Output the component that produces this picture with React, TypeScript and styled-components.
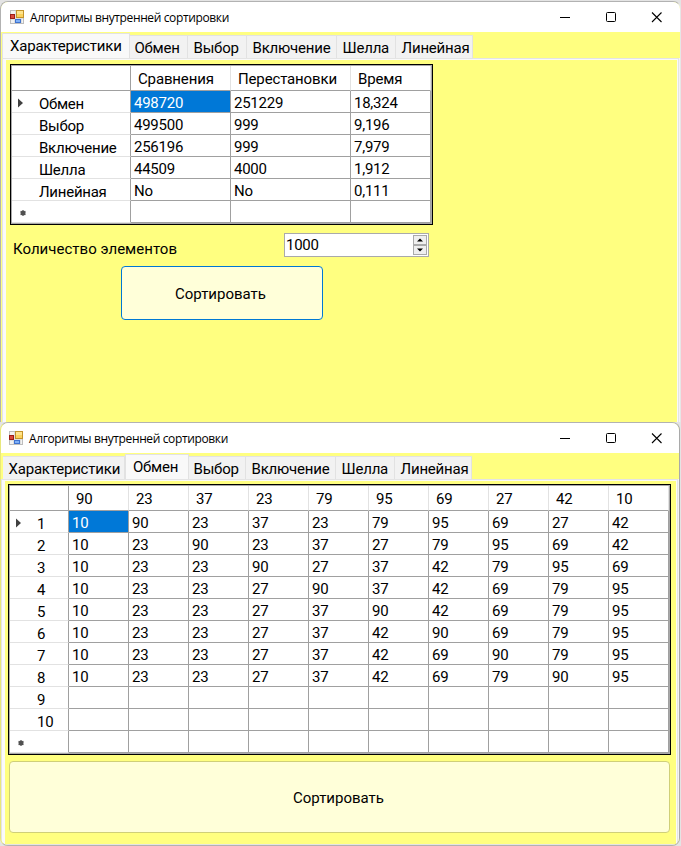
import React from "react";
import styled, { createGlobalStyle } from "styled-components";

const GlobalStyle = createGlobalStyle`
  * { box-sizing: border-box; }
  html, body { margin: 0; padding: 0; }
  body { background: #e4e4e4; overflow: hidden; }
  button { padding: 0; margin: 0; }
`;

const Desktop = styled.main`
  width: 681px;
  height: 846px;
  padding-top: 1px;
  overflow: hidden;
  background: #e4e4e4;
  color: #000;
  font: 15px/22px Roboto, "Liberation Sans", sans-serif;
  letter-spacing: -0.25px;
`;

const Window = styled.section<{ $height: number; $closed?: boolean }>`
  display: flex;
  flex-direction: column;
  width: ${(p) => (p.$closed ? 680 : 681)}px;
  height: ${(p) => p.$height}px;
  border: 1px solid #b2b2b2;
  border-bottom-width: ${(p) => (p.$closed ? 1 : 0)}px;
  border-left-color: ${(p) => (p.$closed ? "#e8e87c" : "#b2b2b2")};
  border-right-color: ${(p) => (p.$closed ? "#a9a9a9" : "#e6e6e6")};
  border-radius: ${(p) => (p.$closed ? "8px" : "8px 8px 0 0")};
  background: #ffff80;
  overflow: hidden;
`;

const TitleBar = styled.header<{ $indent: number }>`
  display: flex;
  align-items: center;
  flex: none;
  height: 30px;
  padding-left: ${(p) => p.$indent}px;
  background: #fff;
`;

const Title = styled.h1`
  flex: 1;
  margin: 1px 0 0 6px;
  font: 400 12px/16px "Open Sans", "Noto Sans", sans-serif;
  letter-spacing: -0.37px;
`;

const Controls = styled.div<{ $inset: number }>`
  display: flex;
  gap: 35px;
  margin-right: ${(p) => p.$inset}px;
`;

const TabStrip = styled.nav<{ $indent: number }>`
  display: flex;
  align-items: flex-end;
  flex: none;
  height: 26px;
  padding-left: ${(p) => p.$indent}px;
`;

const Tab = styled.div<{ $width: number; $active?: boolean }>`
  width: ${(p) => p.$width}px;
  height: ${(p) => (p.$active ? 25 : 23)}px;
  padding-left: ${(p) => (p.$active ? 7 : 5.5)}px;
  border: solid #e2e2e2;
  border-width: 1px 1px 0 ${(p) => (p.$active ? 1 : 0)}px;
  background: ${(p) => (p.$active ? "#f9f9f9" : "#f2f2f2")};
  line-height: ${(p) => (p.$active ? 25 : 24)}px;
  letter-spacing: -0.2px;
  white-space: nowrap;

  ${(p) => p.$active && "& + div { padding-left: 4.5px; }"}
`;

const Page = styled.div<{ $closed?: boolean }>`
  flex: 1;
  min-height: 0;
  margin: 0 1px 0 ${(p) => (p.$closed ? 0 : 1)}px;
  border: solid #e4e4e4;
  border-width: 1px 1px ${(p) => (p.$closed ? 1 : 0)}px 1px;
  box-shadow: inset 3px 1px 0 #fafafa, inset -1px 0 0 #fafafa, 1px 0 0 #f4f4f4;
  padding: ${(p) => (p.$closed ? "4px 6px" : "5px 7px")};
`;

const Grid = styled.div<{ $columns: string; $width: number }>`
  display: grid;
  grid-template-columns: ${(p) => p.$columns};
  grid-auto-rows: 22px;
  grid-template-rows: 25px;
  width: ${(p) => p.$width}px;
  padding: 1px;
  border: 1px solid #000;
  background: #a9a9a9;
`;

const Cell = styled.div<{ $selected?: boolean }>`
  padding-left: 3px;
  border: solid #a0a0a0;
  border-width: 0 1px 1px 0;
  background: ${(p) => (p.$selected ? "#0078d7" : "#fff")};
  color: ${(p) => (p.$selected ? "#fff" : "#000")};
  line-height: 25px;
  white-space: nowrap;
`;

const ColumnHead = styled(Cell)<{ $strong?: boolean }>`
  padding-left: 7px;
  border-right-color: ${(p) => (p.$strong ? "#a0a0a0" : "#e2e2e2")};
  line-height: 26px;
  letter-spacing: -0.15px;
`;

const RowHead = styled(Cell)`
  display: flex;
  border-bottom-color: #e2e2e2;
  padding-left: 4px;
  line-height: 27px;
`;

const Marker = styled.span`
  display: flex;
  align-items: center;
  width: 23px;
  height: 23px;
`;

const Form = styled.div`
  display: flex;
  justify-content: space-between;
  width: 419px;
  margin-top: 8px;
  padding-left: 3px;
`;

const Label = styled.label`
  line-height: 32px;
  letter-spacing: 0.02px;
`;

const Spinner = styled.div`
  display: flex;
  justify-content: space-between;
  width: 145px;
  height: 24px;
  padding: 1px;
  border: 1px solid #aaa;
  background: #fff;
  line-height: 21px;
`;

const SpinButtons = styled.div`
  display: flex;
  flex-direction: column;
  width: 14px;
`;

const SpinButton = styled.button`
  display: flex;
  align-items: center;
  justify-content: center;
  height: 10px;
  border: 1px solid #aaa;
  background: #efefef;
`;

const SortButton = styled.button<{ $focused?: boolean }>`
  display: block;
  width: ${(p) => (p.$focused ? 202 : 661)}px;
  height: ${(p) => (p.$focused ? 54 : 72)}px;
  margin: ${(p) => (p.$focused ? "1px 0 0 111px" : "6px 0 0 1px")};
  padding: ${(p) => (p.$focused ? "2px 3px 0 0" : "2px 2px 0 0")};
  border: 1px solid ${(p) => (p.$focused ? "#0078d4" : "#cfcf78")};
  border-radius: 4px;
  background: #ffffd9;
  color: #000;
  font: inherit;
  letter-spacing: 0;
`;

const AppIcon = () => (
  <svg width="14" height="14" viewBox="0 0 14 14">
    <rect x="0.5" y="0.5" width="13" height="13" fill="#dedede" stroke="#bdbdbd" />
    <path d="M1 1h4v3H1zM1 10h3v3H1zM12 9h1v4h-1z" fill="#f2f2f2" />
    <rect x="0.5" y="4.5" width="4" height="4" fill="#d9483b" stroke="#9c1c16" />
    <rect x="6.5" y="0.5" width="7" height="7" fill="#fbd25c" stroke="#c4932a" />
    <path d="M7 1h6v3H7z" fill="#ffe48c" />
    <rect x="5.5" y="9.5" width="5" height="3" fill="#7fb0f7" stroke="#3f73d0" />
  </svg>
);

const CaptionIcon = ({ kind }: { kind: "min" | "max" | "close" }) => (
  <svg width="11" height="11" viewBox="0 0 11 11" fill="none" stroke="#000">
    {kind === "min" && <path d="M1 5.5h10" />}
    {kind === "max" && <rect x="1.5" y="0.5" width="9" height="9" rx="1" />}
    {kind === "close" && <path d="M1 0.5l9.5 9.5M10.5 0.5L1 10" strokeWidth="1.1" />}
  </svg>
);

const CurrentRow = () => (
  <svg width="12" height="10" viewBox="0 0 12 10">
    <path d="M2 0.5v9l5-4.5z" fill="#404040" />
  </svg>
);

const NewRow = () => (
  <svg width="12" height="8" viewBox="0 0 12 8">
    <path d="M7 1v6M4.4 2.4l5.2 3.2M9.6 2.4L4.4 5.6" stroke="#888" strokeWidth="1.3" />
    <circle cx="7" cy="4" r="2.5" fill="#505050" />
  </svg>
);

const Arrow = ({ down }: { down?: boolean }) => (
  <svg width="6" height="4" viewBox="0 0 6 4">
    <path d={down ? "M0 0.5h6L3 3.5z" : "M0 3.5h6L3 0.5z"} fill="#000" />
  </svg>
);

const TAB_NAMES = ["Характеристики", "Обмен", "Выбор", "Включение", "Шелла", "Линейная"];

const Caption = ({ indent, inset }: { indent: number; inset: number }) => (
  <TitleBar $indent={indent}>
    <AppIcon />
    <Title>Алгоритмы внутренней сортировки</Title>
    <Controls $inset={inset}>
      <CaptionIcon kind="min" />
      <CaptionIcon kind="max" />
      <CaptionIcon kind="close" />
    </Controls>
  </TitleBar>
);

const Tabs = ({ widths, active, indent }: { widths: number[]; active: number; indent: number }) => (
  <TabStrip $indent={indent}>
    {TAB_NAMES.map((name, i) => (
      <Tab key={name} $width={widths[i]} $active={i === active}>
        {name}
      </Tab>
    ))}
  </TabStrip>
);

type TableProps = { heads: string[]; rows: [string, string[]][]; columns: string; width: number };

const DataTable = ({ heads, rows, columns, width }: TableProps) => (
  <Grid $columns={columns} $width={width}>
    <ColumnHead $strong />
    {heads.map((h, i) => (
      <ColumnHead key={i}>{h}</ColumnHead>
    ))}
    {rows.map(([name, values], r) => (
      <React.Fragment key={r}>
        <RowHead>
          <Marker>{r === 0 && <CurrentRow />}</Marker>
          {name}
        </RowHead>
        {heads.map((_, c) => (
          <Cell key={c} $selected={r === 0 && c === 0}>
            {values[c]}
          </Cell>
        ))}
      </React.Fragment>
    ))}
    <RowHead>
      <Marker>
        <NewRow />
      </Marker>
    </RowHead>
    {heads.map((_, c) => (
      <Cell key={c} />
    ))}
  </Grid>
);

const SUMMARY: [string, string[]][] = [
  ["Обмен", ["498720", "251229", "18,324"]],
  ["Выбор", ["499500", "999", "9,196"]],
  ["Включение", ["256196", "999", "7,979"]],
  ["Шелла", ["44509", "4000", "1,912"]],
  ["Линейная", ["No", "No", "0,111"]],
];

const STEPS = [
  "10 90 23 37 23 79 95 69 27 42",
  "10 23 90 23 37 27 79 95 69 42",
  "10 23 23 90 27 37 42 79 95 69",
  "10 23 23 27 90 37 42 69 79 95",
  "10 23 23 27 37 90 42 69 79 95",
  "10 23 23 27 37 42 90 69 79 95",
  "10 23 23 27 37 42 69 90 79 95",
  "10 23 23 27 37 42 69 79 90 95",
  "",
  "",
].map((line, i): [string, string[]] => [String(i + 1), line.split(" ")]);

export default function App() {
  return (
    <Desktop>
      <GlobalStyle />
      <Window $height={421}>
        <Caption indent={9} inset={18} />
        <Tabs widths={[128, 58, 59, 90, 59, 77]} active={0} indent={1} />
        <Page>
          <DataTable
            heads={["Сравнения", "Перестановки", "Время"]}
            rows={SUMMARY}
            columns="119px 100px 120px 80px"
            width={423}
          />
          <Form>
            <Label>Количество элементов</Label>
            <Spinner>
              1000
              <SpinButtons>
                <SpinButton>
                  <Arrow />
                </SpinButton>
                <SpinButton>
                  <Arrow down />
                </SpinButton>
              </SpinButtons>
            </Spinner>
          </Form>
          <SortButton $focused>Сортировать</SortButton>
        </Page>
      </Window>
      <Window $height={424} $closed>
        <Caption indent={8} inset={17} />
        <Tabs widths={[122, 64, 57, 90, 59, 77]} active={1} indent={2} />
        <Page $closed>
          <DataTable
            heads={["90", "23", "37", "23", "79", "95", "69", "27", "42", "10"]}
            rows={STEPS}
            columns="59px repeat(10, 60px)"
            width={663}
          />
          <SortButton>Сортировать</SortButton>
        </Page>
      </Window>
    </Desktop>
  );
}
